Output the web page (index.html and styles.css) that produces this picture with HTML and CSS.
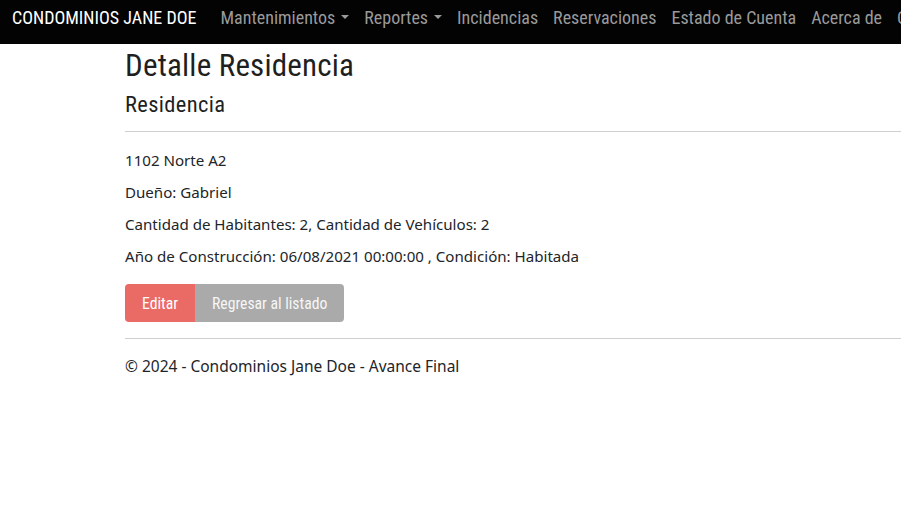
FILE: index.html
```html
<!DOCTYPE html>
<html lang="es">
<head>
<meta charset="utf-8">
<title>Detalle Residencia</title>
<link rel="stylesheet" href="styles.css">
</head>
<body>
<header class="navbar">
  <a class="brand" href="#">CONDOMINIOS JANE DOE</a>
  <nav class="nav">
    <a class="nav-link dropdown" href="#">Mantenimientos</a>
    <a class="nav-link dropdown" href="#">Reportes</a>
    <a class="nav-link" href="#">Incidencias</a>
    <a class="nav-link" href="#">Reservaciones</a>
    <a class="nav-link" href="#">Estado de Cuenta</a>
    <a class="nav-link" href="#">Acerca de</a>
    <a class="nav-link" href="#">Contacto</a>
  </nav>
</header>
<main class="container">
  <h1 class="title">Detalle Residencia</h1>
  <h4 class="subtitle">Residencia</h4>
  <hr class="rule">
  <p class="line">1102 Norte A2</p>
  <p class="line">Dueño: Gabriel</p>
  <p class="line">Cantidad de Habitantes: 2, Cantidad de Vehículos: 2</p>
  <p class="line">Año de Construcción: 06/08/2021 00:00:00 , Condición: Habitada</p>
  <div class="btn-group">
    <a class="btn btn-edit" href="#">Editar</a>
    <a class="btn btn-back" href="#">Regresar al listado</a>
  </div>
  <hr class="rule rule-footer">
  <footer class="footer">© 2024 - Condominios Jane Doe - Avance Final</footer>
</main>
</body>
</html>
```
FILE: styles.css
```css
html, body {
  margin: 0;
  padding: 0;
  background: #fff;
  overflow: hidden;
}
body {
  font-family: "Noto Sans", "Open Sans", sans-serif;
  color: #212529;
}
a { text-decoration: none; }

.navbar {
  height: 44px;
  box-sizing: border-box;
  background: #030303;
  display: flex;
  align-items: flex-start;
  padding: 4px 0 0 12px;
  white-space: nowrap;
  overflow: hidden;
  font-family: "Roboto Condensed", "Roboto", sans-serif;
}
.brand {
  color: #fff;
  font-size: 18px;
  line-height: 28px;
  margin-right: 24px;
}
.nav {
  display: flex;
  gap: 15px;
}
.nav-link {
  color: #9a9a9a;
  font-size: 18px;
  line-height: 28px;
}
.dropdown::after {
  content: "";
  display: inline-block;
  margin-left: 6px;
  vertical-align: 5px;
  border-top: 4px solid #9a9a9a;
  border-left: 4px solid transparent;
  border-right: 4px solid transparent;
}

.container {
  padding-left: 125px;
}
.title {
  font-family: "Roboto Condensed", "Roboto", sans-serif;
  font-weight: 400;
  font-size: 31px;
  letter-spacing: 0.2px;
  line-height: 36px;
  margin: 4px 0 0;
  color: #1f1f1f;
}
.subtitle {
  font-family: "Roboto Condensed", "Roboto", sans-serif;
  font-weight: 400;
  font-size: 22.5px;
  letter-spacing: 0.35px;
  line-height: 26px;
  margin: 7px 0 0;
  color: #1f1f1f;
}
.rule {
  border: 0;
  border-top: 1px solid #cfcfcf;
  margin: 14px 0 0;
}
.line {
  font-size: 15.1px;
  margin: 0;
  line-height: 32px;
}
.rule + .line { margin-top: 12px; }
.btn-group {
  display: flex;
  margin-top: 12px;
}
.btn {
  height: 38px;
  display: flex;
  align-items: center;
  font-family: "Roboto Condensed", "Roboto", sans-serif;
  font-size: 15.7px;
  color: #fff;
  padding: 0 17px;
}
.btn-edit {
  background: #ea6a66;
  border-radius: 4px 0 0 4px;
}
.btn-back {
  background: #aaaaaa;
  color: #f6f6f6;
  border-radius: 0 4px 4px 0;
}
.rule-footer { margin-top: 16px; }
.footer {
  font-size: 15.5px;
  line-height: 24px;
  margin-top: 15px;
}
```
